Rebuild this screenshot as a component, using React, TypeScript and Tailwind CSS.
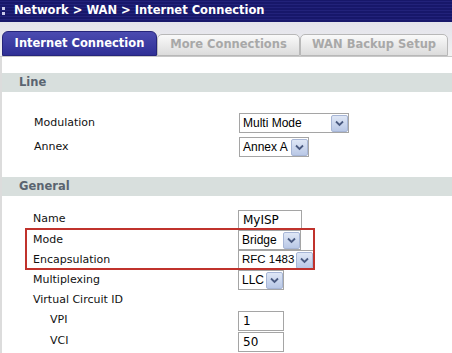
import React from 'react';

const font = { fontFamily: '"DejaVu Sans", Verdana, sans-serif' };

const Arrow: React.FC = () => (
  <div className="w-[17px] h-[17px] ml-[2px] shrink-0 border border-[#a7b6d6] bg-gradient-to-b from-[#dfe7f6] to-[#b9c8e6] flex items-center justify-center rounded-[2px]">
    <svg width="9" height="7" viewBox="0 0 9 7">
      <path d="M1 1.5 L4.5 5 L8 1.5" fill="none" stroke="#4a5a80" strokeWidth="1.8" />
    </svg>
  </div>
);

const Select: React.FC<{ value: string; w: number; small?: boolean }> = ({ value, w, small }) => (
  <div className="flex items-center h-[20px] border border-[#a5a5a5] bg-white" style={{ width: w }}>
    <span
      className={
        small
          ? 'flex-1 pl-[3px] text-[11.5px] text-black font-[Liberation_Sans,Arial,sans-serif] leading-none whitespace-nowrap'
          : 'flex-1 pl-[3px] text-[12px] text-black font-[Liberation_Sans,Arial,sans-serif] leading-none whitespace-nowrap'
      }
    >
      {value}
    </span>
    <Arrow />
  </div>
);

const Input: React.FC<{ value: string; w: number }> = ({ value, w }) => (
  <div className="h-[20px] border border-[#a5a5a5] bg-white flex items-center pl-[4px] text-[12px] text-black" style={{ width: w }}>
    {value}
  </div>
);

const Row: React.FC<{ label: string; indent?: number; children?: React.ReactNode; h?: number }> = ({ label, indent = 31, children, h = 20 }) => (
  <div className="flex items-center" style={{ height: h }}>
    <div className="w-[236px] text-[11px] text-[#111]" style={{ paddingLeft: indent }}>{label}</div>
    {children}
  </div>
);

const Tab: React.FC<{ label: string; active?: boolean; w: number }> = ({ label, active, w }) => (
  <div
    className={
      active
        ? 'h-[25px] rounded-t-[6px] bg-gradient-to-b from-[#4b4bb0] to-[#2f2f96] border border-[#25257a] text-white font-bold text-[11.5px] flex items-center justify-center'
        : 'h-[22px] rounded-t-[5px] bg-gradient-to-b from-[#fafafa] to-[#dcdcdc] border border-[#b8b8b8] text-[#a8a8a8] font-bold text-[11.5px] flex items-center justify-center'
    }
    style={{ width: w }}
  >
    {label}
  </div>
);

export default function App() {
  return (
    <div className="w-[452px] h-[353px] overflow-hidden bg-white" style={font}>
      <div className="h-[22px] bg-[#17176a] bg-[repeating-linear-gradient(0deg,#17176a_0px,#17176a_2px,#22227a_2px,#22227a_3px)] flex items-center">
        <div className="w-[5px] h-[8px] ml-[2px] flex flex-col justify-between">
          <div className="w-[3px] h-[3px] bg-[#c8c8e8]" />
          <div className="w-[3px] h-[3px] bg-[#c8c8e8]" />
        </div>
        <span className="ml-[7px] text-white font-bold text-[11.5px]">Network &gt; WAN &gt; Internet Connection</span>
      </div>
      <div className="h-[35px] bg-gradient-to-b from-[#e2e2ea] to-[#f2f2f2] flex items-end pl-[2px] border-b border-[#c8c8c8]">
        <Tab label="Internet Connection" active w={155} />
        <Tab label="More Connections" w={143} />
        <Tab label="WAN Backup Setup" w={148} />
      </div>
      <div className="border-l-[2px] border-[#dcdcdc] h-full">
        <div className="h-[16px]" />
        <div className="h-[19px] bg-[#d8dfdd] flex items-center pl-[17px] text-[#5a6470] font-bold text-[11.5px]">Line</div>
        <div className="h-[19px]" />
        <Row label="Modulation" indent={32} h={24}>
          <div className="ml-[1px]"><Select value="Multi Mode" w={110} /></div>
        </Row>
        <Row label="Annex" indent={32} h={24}>
          <div className="ml-[1px]"><Select value="Annex A" w={70} /></div>
        </Row>
        <div className="h-[18px]" />
        <div className="h-[19px] bg-[#d8dfdd] flex items-center pl-[17px] text-[#5a6470] font-bold text-[11.5px]">General</div>
        <div className="h-[13px]" />
        <Row label="Name" h={21}>
          <Input value="MyISP" w={64} />
        </Row>
        <div className="relative">
          <div className="absolute left-[23px] top-[-2px] w-[290px] h-[42px] border-2 border-[#c0322c] pointer-events-none" />
          <Row label="Mode">
            <Select value="Bridge" w={63} />
          </Row>
          <Row label="Encapsulation">
            <Select value="RFC 1483" w={76} small />
          </Row>
        </div>
        <Row label="Multiplexing">
          <Select value="LLC" w={46} />
        </Row>
        <Row label="Virtual Circuit ID" />
        <Row label="VPI" indent={48} h={21}>
          <Input value="1" w={46} />
        </Row>
        <Row label="VCI" indent={48} h={21}>
          <Input value="50" w={46} />
        </Row>
      </div>
    </div>
  );
}
